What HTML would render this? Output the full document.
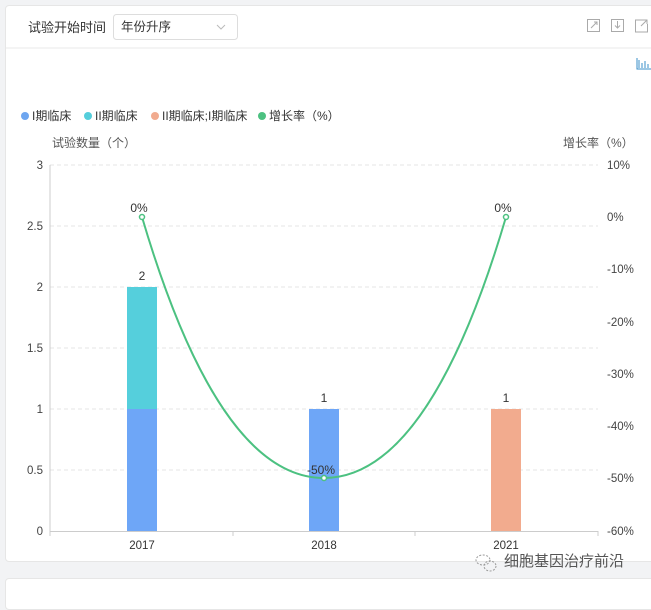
<!DOCTYPE html>
<html><head><meta charset="utf-8"><style>
body{margin:0;width:651px;height:588px;background:#f2f3f5;overflow:hidden;font-family:"Liberation Sans","Noto Sans CJK SC",sans-serif;position:relative}
.card{position:absolute;left:5px;top:5px;width:660px;height:555px;background:#fff;border:1px solid #e6e6e6;border-radius:4px}
.card2{position:absolute;left:5px;top:578px;width:660px;height:30px;background:#fff;border:1px solid #e6e6e6;border-radius:4px}
</style></head><body>
<div class="card"></div>
<div class="card2"></div>
<svg width="651" height="588" style="position:absolute;left:0;top:0" font-family="Liberation Sans, Noto Sans CJK SC, sans-serif">
<line x1="6" y1="48" x2="651" y2="48" stroke="#e8e8e8"/>
<text x="28" y="32" font-size="13" fill="#333">试验开始时间</text>
<rect x="113.5" y="14.5" width="124" height="25" rx="3" fill="#fff" stroke="#ddd"/>
<text x="121" y="31" font-size="12.5" fill="#333">年份升序</text>
<path d="M217 25l4 4 4-4" fill="none" stroke="#bbb"/>
<g fill="none" stroke="#aaa" stroke-width="1">
<rect x="587.5" y="19.5" width="12" height="12"/><path d="M591 28l6-6M594 22h3v3"/>
<rect x="611.5" y="19.5" width="12" height="12"/><path d="M617.5 21v7M615 25.5l2.5 2.5 2.5-2.5"/>
<path d="M644 20h-8.5v12h12v-8M641 26l6-6M643 20h4v4"/>
</g>
<g stroke="#3a8fc9" fill="none"><path d="M637 58v11h14M639 60v8M642 63v5M645 61v7M648 64v4"/></g>
<g font-size="12" fill="#333">
<circle cx="25" cy="116" r="4" fill="#6ea6f0"/><text x="32" y="120">I期临床</text>
<circle cx="88" cy="116" r="4" fill="#55cedb"/><text x="95" y="120">II期临床</text>
<circle cx="155" cy="116" r="4" fill="#f1ab8f"/><text x="162" y="120">II期临床;I期临床</text>
<circle cx="262" cy="116" r="4" fill="#4cc181"/><text x="269" y="120">增长率（%）</text>
</g>
<text x="52" y="147" font-size="12" fill="#555">试验数量（个）</text>
<text x="563" y="147" font-size="12" fill="#555">增长率（%）</text>
<g stroke="#e4e4e4" stroke-dasharray="4,3">
<line x1="50" y1="165" x2="598" y2="165"/><line x1="50" y1="226" x2="598" y2="226"/><line x1="50" y1="287" x2="598" y2="287"/><line x1="50" y1="348" x2="598" y2="348"/><line x1="50" y1="409" x2="598" y2="409"/><line x1="50" y1="470" x2="598" y2="470"/>
</g>
<line x1="50" y1="165" x2="50" y2="531" stroke="#ccc"/>
<line x1="50" y1="531.5" x2="598" y2="531.5" stroke="#ccc"/>
<g stroke="#ccc"><line x1="50" y1="531" x2="50" y2="536"/><line x1="233" y1="531" x2="233" y2="536"/><line x1="415" y1="531" x2="415" y2="536"/><line x1="598" y1="531" x2="598" y2="536"/></g>
<g font-size="11.5" fill="#444" text-anchor="end">
<text x="43" y="169">3</text><text x="43" y="230">2.5</text><text x="43" y="291">2</text><text x="43" y="352">1.5</text><text x="43" y="413">1</text><text x="43" y="474">0.5</text><text x="43" y="535">0</text>
</g>
<g font-size="11.5" fill="#444">
<text x="607" y="169">10%</text><text x="607" y="221">0%</text><text x="607" y="273">-10%</text><text x="607" y="326">-20%</text><text x="607" y="378">-30%</text><text x="607" y="430">-40%</text><text x="607" y="482">-50%</text><text x="607" y="535">-60%</text>
</g>
<g font-size="11.5" fill="#333" text-anchor="middle">
<text x="142" y="549">2017</text><text x="324" y="549">2018</text><text x="506" y="549">2021</text>
</g>
<rect x="127" y="409" width="30" height="122" fill="#6ea6f7"/>
<rect x="127" y="287" width="30" height="122" fill="#55cfdc"/>
<rect x="309" y="409" width="30" height="122" fill="#6ea6f7"/>
<rect x="491" y="409" width="30" height="122" fill="#f2ab8e"/>
<g font-size="12" fill="#333" text-anchor="middle">
<text x="142" y="280">2</text><text x="324" y="402">1</text><text x="506" y="402">1</text>
<text x="139" y="212">0%</text><text x="321" y="474">-50%</text><text x="503" y="212">0%</text>
</g>
<path d="M142 217C190 380 250 478 324 478S458 380 506 217" fill="none" stroke="#4cc181" stroke-width="2"/>
<g fill="#fff" stroke="#4cc181" stroke-width="1.5"><circle cx="142" cy="217" r="2.5"/><circle cx="324" cy="478" r="2.5"/><circle cx="506" cy="217" r="2.5"/></g>
<g fill="none" stroke="#999" stroke-dasharray="2,1.5"><ellipse cx="483" cy="560" rx="7" ry="5"/><ellipse cx="490" cy="566" rx="6" ry="5"/></g>
<text x="504" y="566" font-size="15" fill="#555">细胞基因治疗前沿</text>
</svg>
</body></html>
